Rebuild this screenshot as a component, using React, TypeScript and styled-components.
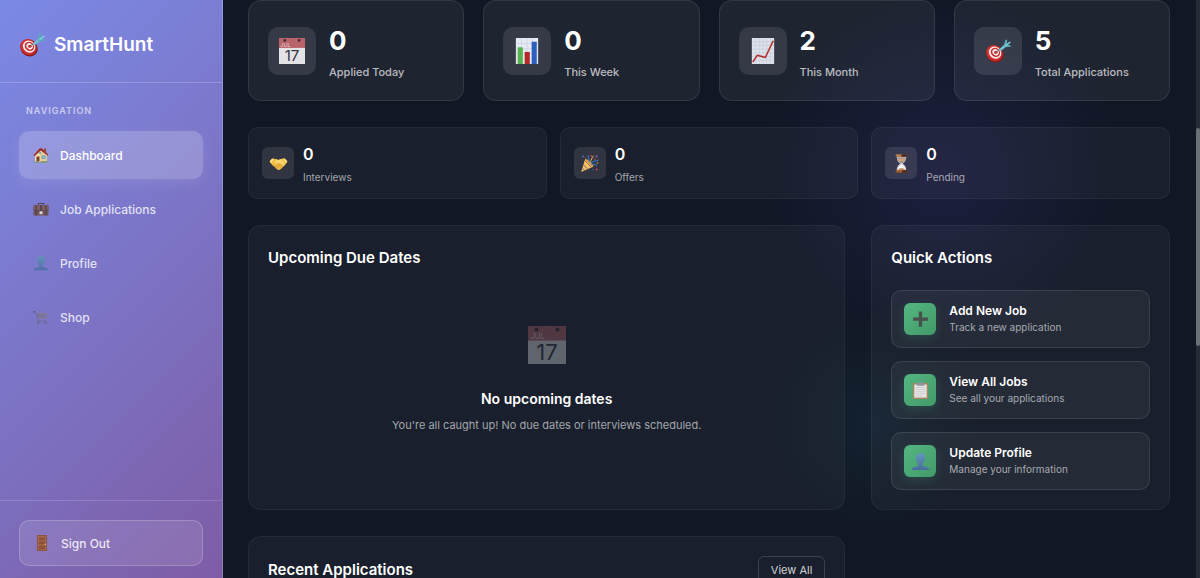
import React from 'react';
import styled, { createGlobalStyle, css } from 'styled-components';

const GlobalStyle = createGlobalStyle`
  * { box-sizing: border-box; }
  body {
    margin: 0;
    background: #111725;
    color: #fff;
    font-family: Inter, 'Liberation Sans', sans-serif;
    font-size: 12px;
  }
  h1, h2, h3, p, ul { margin: 0; padding: 0; }
  ul { list-style: none; }
  button { font: inherit; color: inherit; cursor: pointer; text-align: left; }
  svg { display: block; flex: none; }
`;

/* ---------- emoji drawings ---------- */

type IconProps = { size: number };

const Target = ({ size }: IconProps) => (
  <svg width={size} height={size} viewBox="0 0 32 32" aria-hidden="true">
    <ellipse cx="12.4" cy="19.8" rx="11" ry="10" fill="#8e1a1c" transform="rotate(40 12.4 19.8)" />
    <ellipse cx="11.6" cy="18.4" rx="10.4" ry="9.4" fill="#cf2f2f" transform="rotate(40 11.6 18.4)" />
    <ellipse cx="12.4" cy="18" rx="8" ry="7.2" fill="#f6eeee" transform="rotate(40 12.4 18)" />
    <ellipse cx="12.8" cy="17.800" rx="6.100" ry="5.400" fill="#c93030" transform="rotate(40 12.8 17.8)" />
    <ellipse cx="13.100" cy="17.600" rx="4.200" ry="3.600" fill="#f6eeee" transform="rotate(40 13.1 17.6)" />
    <ellipse cx="13.300" cy="17.500" rx="2.200" ry="1.900" fill="#c93030" />
    <path d="M13.400 17.500 20 12.600" stroke="#5b6770" strokeWidth="1.200" />
    <path d="M17 14.600 24 7.600l2.600 2.800-8 6.200z" fill="#6fc3d2" />
    <path d="M23 9.200 25.200 1.800l2 .7-.2 5.300 5 1.600-.4 1.500-7.800.6z" fill="#58a9b8" />
    <path d="M24.400 9 30.600 4.200l1.200 1.400-6.200 5z" fill="#7fd3dd" />
  </svg>
);

const House = ({ size }: IconProps) => (
  <svg width={size} height={size} viewBox="0 0 32 32" aria-hidden="true">
    <path d="M22 3h4v8h-4z" fill="#a04a3c" />
    <path d="M4 15 14 5l14 9v16H4z" fill="#efdcb4" />
    <path d="M14 6 28 14v16H15z" fill="#e2cb9c" />
    <path d="M1 16.500 13 3l4-1 14 13.400-2 1.800L15.600 7 3 18.400z" fill="#9c2f2c" />
    <path d="M7 19h6v10H7z" fill="#7a4326" />
    <path d="M17.500 17h7.500v7h-7.500z" fill="#5c9aa0" />
    <path d="M21.200 17v7M17.500 20.500H25" stroke="#dfeef0" strokeWidth="0.800" />
    <circle cx="14" cy="12" r="1.800" fill="#5c9aa0" />
    <path d="M2 29h10v2H2zM15 28.500h14V31H15z" fill="#6f9150" />
  </svg>
);

const Briefcase = ({ size }: IconProps) => (
  <svg width={size} height={size} viewBox="0 0 32 32" aria-hidden="true">
    <path d="M10.500 9V5h11v4" fill="none" stroke="#4b3b35" strokeWidth="2.200" />
    <rect x="1" y="8" width="30" height="21" rx="2.500" fill="#6b4a3c" />
    <path d="M1 10.500Q1 8 3.500 8h25Q31 8 31 10.500V18q-15 4-30 0z" fill="#7d5847" />
    <path d="M1 18q15 4 30 0" fill="none" stroke="#473029" strokeWidth="1.200" />
    <path d="M5 8h3v21H5zM24 8h3v21h-3z" fill="#56392f" />
    <path d="M14.500 8h3v14h-3z" fill="#3f2c27" />
    <rect x="13" y="20.500" width="6" height="6" rx="1" fill="#f0ead8" />
  </svg>
);

const Bust = ({ size }: IconProps) => (
  <svg width={size} height={size} viewBox="0 0 32 32" aria-hidden="true">
    <defs>
      <linearGradient id="bust" x1="0" y1="0" x2="0" y2="1">
        <stop offset="0" stopColor="#6199b8" />
        <stop offset="1" stopColor="#4a6a9e" />
      </linearGradient>
    </defs>
    <path
      d="M16 1.500c5 0 8 3.600 8 8.600 0 4.200-1.800 7.600-4.200 9.400v2.600c0 1.200.8 1.800 2.200 2.300l5.800 1.900c2.200.8 3.200 2 3.200 4.200H1c0-2.200 1-3.400 3.200-4.200l5.800-1.900c1.400-.5 2.200-1.100 2.200-2.300v-2.600C9.800 17.700 8 14.300 8 10.100c0-5 3-8.600 8-8.600z"
      fill="url(#bust)"
    />
  </svg>
);

const Cart = ({ size }: IconProps) => (
  <svg width={size} height={size} viewBox="0 0 32 32" fill="none" aria-hidden="true">
    <path d="M5.500 8h24l-3 11.500H9z" fill="#85819c" />
    <path d="M1 5.500h4.500l5 18.500H27" stroke="#6d6788" strokeWidth="1.800" />
    <path d="M7 11.500h21.500M8 15h19.500M11 8l2 11.500M15.500 8l1 11.500M20 8v11.500M24.500 8l-1.500 11.500" stroke="#6b6685" strokeWidth="0.900" />
    <circle cx="2.200" cy="5.500" r="1.700" fill="#504a68" />
    <circle cx="10.500" cy="27.500" r="2.700" fill="#5c5775" />
    <circle cx="25.500" cy="27.500" r="2.700" fill="#5c5775" />
    <circle cx="10.500" cy="27.500" r="1" fill="#aaa6bf" />
    <circle cx="25.500" cy="27.500" r="1" fill="#aaa6bf" />
  </svg>
);

const Door = ({ size }: IconProps) => (
  <svg width={size} height={size} viewBox="0 0 32 32" aria-hidden="true">
    <path d="M6 0h20v32H6z" fill="#8b5343" />
    <path d="M8 2h16v28H8z" fill="#a9694c" />
    <path d="M10 4.500h12v5H10zM10 12.500h12v5H10zM10 21h12v6.500H10z" fill="#8f533f" />
    <path d="M10 9.500h12M10 17.500h12M10 27.500h12" stroke="#704031" strokeWidth="1" />
    <circle cx="22.700" cy="18.500" r="1.500" fill="#e1bd68" />
  </svg>
);

const Calendar = ({ size }: IconProps) => (
  <svg width={size} height={size} viewBox="0 0 38 38" aria-hidden="true">
    <path d="M0 0h38v38H0z" fill="#e4e4e7" />
    <path d="M0 0h38v14.500H0z" fill="#b8646a" />
    <circle cx="8.500" cy="3.500" r="2" fill="#3c2b36" />
    <circle cx="29.500" cy="3.500" r="2" fill="#3c2b36" />
    <text x="2" y="12.500" fontFamily="Inter, sans-serif" fontSize="8" fill="#ecd6d8">JUL</text>
    <text x="19" y="34" textAnchor="middle" fontFamily="Inter, sans-serif" fontSize="22" fill="#33353f">17</text>
  </svg>
);

const BarChart = ({ size }: IconProps) => (
  <svg width={size} height={size} viewBox="0 0 28 28" aria-hidden="true">
    <path d="M2 0h24v28H2z" fill="#e6e9f4" />
    <path d="M8 0v28M14 0v28M20 0v28M2 6h24M2 11.500h24M2 17h24M2 22.500h24" stroke="#c9cfe2" strokeWidth="0.700" />
    <path d="M4 10h5.500v18H4z" fill="#57b44c" />
    <path d="M11.500 15H17v13h-5.500z" fill="#b32a26" />
    <path d="M19 4h5.500v24H19z" fill="#2c5fc0" />
  </svg>
);

const LineChart = ({ size }: IconProps) => (
  <svg width={size} height={size} viewBox="0 0 28 28" aria-hidden="true">
    <path d="M2 0h24v28H2z" fill="#dde1ea" />
    <path d="M6 0v28M10 0v28M14 0v28M18 0v28M22 0v28M2 4h24M2 8h24M2 12h24M2 16h24M2 20h24M2 24h24" stroke="#c3c9d6" strokeWidth="0.600" />
    <path d="m3 26 5-7.500 8.500 2.500L25 3" fill="none" stroke="#b32d2b" strokeWidth="1.700" strokeLinejoin="round" />
  </svg>
);

const Handshake = ({ size }: IconProps) => (
  <svg width={size} height={size} viewBox="0 0 32 32" aria-hidden="true">
    <path d="M.8 12.500 4.500 7.800q1-.9 2.400-.3L12 9l4 1 4-1.500 5-1.200q1.500-.3 2.500.8l3.700 4.600-3.700 5.600L20 25.200q-3.600 3.600-7 .2L5 18.200z" fill="#f2bd45" />
    <path d="m12 9 4 1 4-1.500 6.500 8.400-2.500 3.800-8.500-6.200-3.600 1.700q-2.500-.4-1.700-2.600z" fill="#fbd670" />
    <path d="m9 19.500 3.800 5.700M12 18l4 6.500M15.500 17l4.500 6M18 16l6 4.800" stroke="#b9771f" strokeWidth="1" />
    <path d="M1.500 12.500 5 8.500l2.500.6L3.500 15zM30.500 12.500 27 8.500l-2.500.6 4 5.900z" fill="#ffe08a" />
  </svg>
);

const Popper = ({ size }: IconProps) => (
  <svg width={size} height={size} viewBox="0 0 32 32" fill="none" aria-hidden="true">
    <path d="M2 30.500 8.500 9q8 3 13.500 12.500z" fill="#f2c65c" />
    <path d="m5.800 18 7.500 8M4 24l4.500 4.200M8 11l11.500 12" stroke="#8c5196" strokeWidth="1.600" />
    <ellipse cx="15.500" cy="15" rx="9.200" ry="2.800" transform="rotate(43 15.500 15)" fill="#d9a13f" />
    <path d="M16 14c0-6-3-7-2-12M18 16c4-7 9-2 13-6M19 18c5-2 8-1 9 3" stroke="#3c79cc" strokeWidth="1.700" />
    <path d="M17 13c3-3 2-6 6-10" stroke="#f2cb50" strokeWidth="1.600" />
    <circle cx="5" cy="4" r="1.600" fill="#3c79cc" />
    <circle cx="19" cy="3" r="1.500" fill="#d6425e" />
    <circle cx="28" cy="4" r="1.700" fill="#8d51a8" />
    <circle cx="25" cy="9" r="1.300" fill="#d6425e" />
    <circle cx="29.500" cy="15" r="1.300" fill="#e3b13e" />
    <circle cx="28" cy="26" r="1.600" fill="#d6425e" />
    <circle cx="9" cy="6.500" r="1.200" fill="#d6425e" />
    <path d="m21 25 2 2" stroke="#3c79cc" strokeWidth="1.500" />
  </svg>
);

const Hourglass = ({ size }: IconProps) => (
  <svg width={size} height={size} viewBox="0 0 32 32" aria-hidden="true">
    <path d="M8 4h16c0 7-2.500 9-6 12 3.500 3 6 5 6 12H8c0-7 2.500-9 6-12-3.500-3-6-5-6-12z" fill="#c9ced4" />
    <path d="M8.500 6h15c-.8 5-3 7-7.500 10-4-3-6.700-5-7.500-10z" fill="#9c8d84" />
    <path d="M9.500 8h13l-2 4h-9z" fill="#d3a27c" />
    <path d="M16 17c3 2.500 6.500 5 7 11H9c.5-6 4-8.500 7-11z" fill="#f5f5f3" />
    <path d="M9 28c1-3 4-4.500 7-4.500s6 1.500 7 4.500z" fill="#c58d62" />
    <rect x="6" y="0.500" width="20" height="4" rx="1.800" fill="#b9774c" />
    <path d="M16 .5h8.200q1.800 0 1.800 2t-1.800 2H16z" fill="#3e2a22" />
    <rect x="6" y="27.500" width="20" height="4" rx="1.800" fill="#96582f" />
    <path d="M17 27.500h7.200q1.800 0 1.800 2t-1.800 2H17z" fill="#4a2b1d" />
  </svg>
);

const Plus = ({ size }: IconProps) => (
  <svg width={size} height={size} viewBox="0 0 32 32" aria-hidden="true">
    <path d="M13.200 2.500h5.600v10.200h9.700v5.600h-9.700v9.700h-5.600v-9.700H3.500v-5.600h9.700z" fill="#46504c" />
  </svg>
);

const Clipboard = ({ size }: IconProps) => (
  <svg width={size} height={size} viewBox="0 0 32 32" aria-hidden="true">
    <rect x="3" y="3.500" width="26" height="27" rx="1.500" fill="#a98560" />
    <path d="M5.500 6h21v22h-21z" fill="#e4e3e3" />
    <path d="M8 11h16M8 14.500h16M8 18h16M8 21.500h16M8 25h11" stroke="#c9cacd" strokeWidth="1.200" />
    <path d="M10 3.500h3.500a2.500 2.500 0 0 1 5 0H22V8H10z" fill="#8e979e" />
  </svg>
);

/* ---------- shell ---------- */

const Shell = styled.div`
  display: flex;
  height: 100vh;
  overflow: hidden;
`;

const Sidebar = styled.aside`
  display: flex;
  flex-direction: column;
  flex: none;
  width: 223px;
  background: linear-gradient(135deg, #7b8ae6 0%, #7c73c4 52%, #7e5ca5 100%);
  border-right: 1px solid rgba(255, 255, 255, 0.15);
`;

const Brand = styled.div`
  display: flex;
  align-items: center;
  gap: 9px;
  height: 83px;
  padding: 8px 19px 0;
  border-bottom: 1px solid rgba(255, 255, 255, 0.2);
`;

const BrandName = styled.h1`
  font-size: 19px;
  line-height: 30px;
  font-weight: 600;
`;

const Nav = styled.nav`
  flex: 1;
  padding: 19px;
`;

const NavHeading = styled.h2`
  padding-left: 7px;
  margin-bottom: 12px;
  font-size: 9px;
  line-height: 17px;
  font-weight: 600;
  letter-spacing: 1px;
  text-transform: uppercase;
  color: rgba(255, 255, 255, 0.6);
`;

const NavList = styled.ul`
  display: flex;
  flex-direction: column;
  gap: 6px;
`;

const NavLink = styled.a<{ $active?: boolean }>`
  display: flex;
  align-items: center;
  gap: 11px;
  height: 48px;
  padding: 0 14px;
  border-radius: 10px;
  font-weight: 500;
  text-decoration: none;
  color: rgba(255, 255, 255, 0.8);
  svg { opacity: 0.8; }
  ${({ $active }) =>
    $active &&
    css`
      color: #fff;
      background: rgba(255, 255, 255, 0.2);
      box-shadow: 0 4px 14px rgba(255, 255, 255, 0.1);
      svg { opacity: 1; }
    `}
`;

const SidebarFooter = styled.div`
  padding: 19px 19px 12px;
  border-top: 1px solid rgba(255, 255, 255, 0.15);
`;

const SignOut = styled.button`
  display: flex;
  align-items: center;
  gap: 11px;
  width: 100%;
  height: 46px;
  padding: 0 14px;
  border: 1px solid rgba(255, 255, 255, 0.2);
  border-radius: 10px;
  background: rgba(255, 255, 255, 0.1);
  color: rgba(255, 255, 255, 0.85);
  font-weight: 500;
`;

const Main = styled.main`
  flex: 1;
  min-width: 0;
  overflow-y: auto;
  scrollbar-width: none;
  display: flex;
  flex-direction: column;
  gap: 26px;
  padding: 0 26px 26px 25px;
  background:
    radial-gradient(circle 180px at 74% 30%, rgba(60, 55, 140, 0.25), transparent),
    radial-gradient(circle 110px at 67% 73%, rgba(30, 90, 100, 0.16), transparent),
    #111725;
`;

const ScrollTrack = styled.div`
  flex: none;
  width: 4px;
  padding-top: 128px;
  background: #262c37;
`;

const ScrollThumb = styled.div`
  height: 218px;
  border-radius: 2px;
  background: #6b7077;
`;

/* ---------- statistics ---------- */

const StatGrid = styled.section<{ $columns: number; $gap: number }>`
  display: grid;
  grid-template-columns: repeat(${({ $columns }) => $columns}, 1fr);
  gap: ${({ $gap }) => $gap}px;
`;

const StatCard = styled.div<{ $small?: boolean }>`
  display: flex;
  align-items: center;
  gap: ${({ $small }) => ($small ? 9 : 13)}px;
  padding: ${({ $small }) => ($small ? '13px' : '18px 19px')};
  border: 1px solid rgba(255, 255, 255, ${({ $small }) => ($small ? 0.05 : 0.09)});
  border-radius: ${({ $small }) => ($small ? 10 : 13)}px;
  background: rgba(255, 255, 255, ${({ $small }) => ($small ? 0.035 : 0.06)});
`;

const StatIcon = styled.div<{ $small?: boolean }>`
  display: grid;
  place-items: center;
  flex: none;
  width: ${({ $small }) => ($small ? 32 : 48)}px;
  height: ${({ $small }) => ($small ? 32 : 48)}px;
  border-radius: ${({ $small }) => ($small ? 6 : 10)}px;
  background: rgba(255, 255, 255, 0.1);
`;

const StatText = styled.div<{ $small?: boolean }>`
  display: flex;
  flex-direction: column;
  gap: ${({ $small }) => ($small ? 2 : 1)}px;
`;

const StatValue = styled.div<{ $small?: boolean }>`
  font-size: ${({ $small }) => ($small ? 16 : 26)}px;
  line-height: ${({ $small }) => ($small ? 26 : 43)}px;
  font-weight: ${({ $small }) => ($small ? 600 : 700)};
`;

const StatLabel = styled.div<{ $small?: boolean }>`
  font-size: ${({ $small }) => ($small ? 10 : 11)}px;
  line-height: ${({ $small }) => ($small ? 16 : 19)}px;
  font-weight: ${({ $small }) => ($small ? 400 : 500)};
  color: rgba(255, 255, 255, ${({ $small }) => ($small ? 0.6 : 0.7)});
`;

/* ---------- panels ---------- */

const PanelGrid = styled.div`
  display: grid;
  grid-template-columns: 2fr 1fr;
  gap: 26px;
`;

const Panel = styled.section`
  min-width: 0;
  padding: 19px;
  border: 1px solid rgba(255, 255, 255, 0.05);
  border-radius: 13px;
  background: rgba(255, 255, 255, 0.035);
`;

const PanelHeader = styled.div`
  display: flex;
  align-items: center;
  justify-content: space-between;
  margin-bottom: 19px;
`;

const PanelTitle = styled.h2`
  font-size: 15px;
  line-height: 26px;
  font-weight: 600;
`;

const EmptyState = styled.div`
  display: flex;
  flex-direction: column;
  align-items: center;
  padding: 26px;
  text-align: center;
`;

const EmptyIcon = styled.div`
  padding: 10px 0 23px;
  opacity: 0.35;
`;

const EmptyTitle = styled.h3`
  margin-bottom: 5px;
  font-size: 14px;
  line-height: 24px;
  font-weight: 600;
`;

const EmptyText = styled.p`
  font-size: 11px;
  line-height: 19px;
  color: rgba(255, 255, 255, 0.6);
`;

const Actions = styled.div`
  display: flex;
  flex-direction: column;
  gap: 13px;
`;

const ActionButton = styled.button`
  display: flex;
  align-items: center;
  gap: 13px;
  width: 100%;
  height: 58px;
  padding: 0 12px;
  border: 1px solid rgba(255, 255, 255, 0.1);
  border-radius: 10px;
  background: rgba(255, 255, 255, 0.05);
`;

const ActionIcon = styled.span`
  display: grid;
  place-items: center;
  flex: none;
  width: 32px;
  height: 32px;
  border-radius: 6px;
  background: linear-gradient(135deg, #55b681, #419a69);
  box-shadow: 0 3px 10px rgba(72, 187, 120, 0.2);
`;

const ActionText = styled.span`
  display: flex;
  flex-direction: column;
  line-height: 16px;
`;

const ActionTitle = styled.span`
  font-size: 12px;
  font-weight: 600;
`;

const ActionHint = styled.span`
  font-size: 10px;
  color: rgba(255, 255, 255, 0.6);
`;

const OutlineButton = styled.button`
  height: 28px;
  padding: 0 12px;
  border: 1px solid rgba(255, 255, 255, 0.15);
  border-radius: 6px;
  background: transparent;
  font-size: 11px;
  color: rgba(255, 255, 255, 0.8);
`;

const navItems = [
  { label: 'Dashboard', Icon: House, active: true },
  { label: 'Job Applications', Icon: Briefcase },
  { label: 'Profile', Icon: Bust },
  { label: 'Shop', Icon: Cart },
];

const mainStats = [
  { label: 'Applied Today', value: 0, Icon: Calendar },
  { label: 'This Week', value: 0, Icon: BarChart },
  { label: 'This Month', value: 2, Icon: LineChart },
  { label: 'Total Applications', value: 5, Icon: Target },
];

const secondaryStats = [
  { label: 'Interviews', value: 0, Icon: Handshake },
  { label: 'Offers', value: 0, Icon: Popper },
  { label: 'Pending', value: 0, Icon: Hourglass },
];

const actions = [
  { title: 'Add New Job', hint: 'Track a new application', Icon: Plus },
  { title: 'View All Jobs', hint: 'See all your applications', Icon: Clipboard },
  { title: 'Update Profile', hint: 'Manage your information', Icon: Bust },
];

export default function App() {
  return (
    <>
      <GlobalStyle />
      <Shell>
        <Sidebar>
          <Brand>
            <Target size={26} />
            <BrandName>SmartHunt</BrandName>
          </Brand>
          <Nav>
            <NavHeading>Navigation</NavHeading>
            <NavList>
              {navItems.map(({ label, Icon, active }) => (
                <li key={label}>
                  <NavLink href="#" $active={active}>
                    <Icon size={16} />
                    {label}
                  </NavLink>
                </li>
              ))}
            </NavList>
          </Nav>
          <SidebarFooter>
            <SignOut type="button">
              <Door size={16} />
              Sign Out
            </SignOut>
          </SidebarFooter>
        </Sidebar>

        <Main>
          <StatGrid $columns={4} $gap={19}>
            {mainStats.map(({ label, value, Icon }) => (
              <StatCard key={label}>
                <StatIcon><Icon size={26} /></StatIcon>
                <StatText>
                  <StatValue>{value}</StatValue>
                  <StatLabel>{label}</StatLabel>
                </StatText>
              </StatCard>
            ))}
          </StatGrid>

          <StatGrid $columns={3} $gap={13}>
            {secondaryStats.map(({ label, value, Icon }) => (
              <StatCard key={label} $small>
                <StatIcon $small><Icon size={19} /></StatIcon>
                <StatText $small>
                  <StatValue $small>{value}</StatValue>
                  <StatLabel $small>{label}</StatLabel>
                </StatText>
              </StatCard>
            ))}
          </StatGrid>

          <PanelGrid>
            <Panel>
              <PanelHeader><PanelTitle>Upcoming Due Dates</PanelTitle></PanelHeader>
              <EmptyState>
                <EmptyIcon><Calendar size={38} /></EmptyIcon>
                <EmptyTitle>No upcoming dates</EmptyTitle>
                <EmptyText>You're all caught up! No due dates or interviews scheduled.</EmptyText>
              </EmptyState>
            </Panel>
            <Panel>
              <PanelHeader><PanelTitle>Quick Actions</PanelTitle></PanelHeader>
              <Actions>
                {actions.map(({ title, hint, Icon }) => (
                  <ActionButton key={title} type="button">
                    <ActionIcon><Icon size={19} /></ActionIcon>
                    <ActionText>
                      <ActionTitle>{title}</ActionTitle>
                      <ActionHint>{hint}</ActionHint>
                    </ActionText>
                  </ActionButton>
                ))}
              </Actions>
            </Panel>
            <Panel>
              <PanelHeader>
                <PanelTitle>Recent Applications</PanelTitle>
                <OutlineButton type="button">View All</OutlineButton>
              </PanelHeader>
            </Panel>
          </PanelGrid>
        </Main>
        <ScrollTrack><ScrollThumb /></ScrollTrack>
      </Shell>
    </>
  );
}
